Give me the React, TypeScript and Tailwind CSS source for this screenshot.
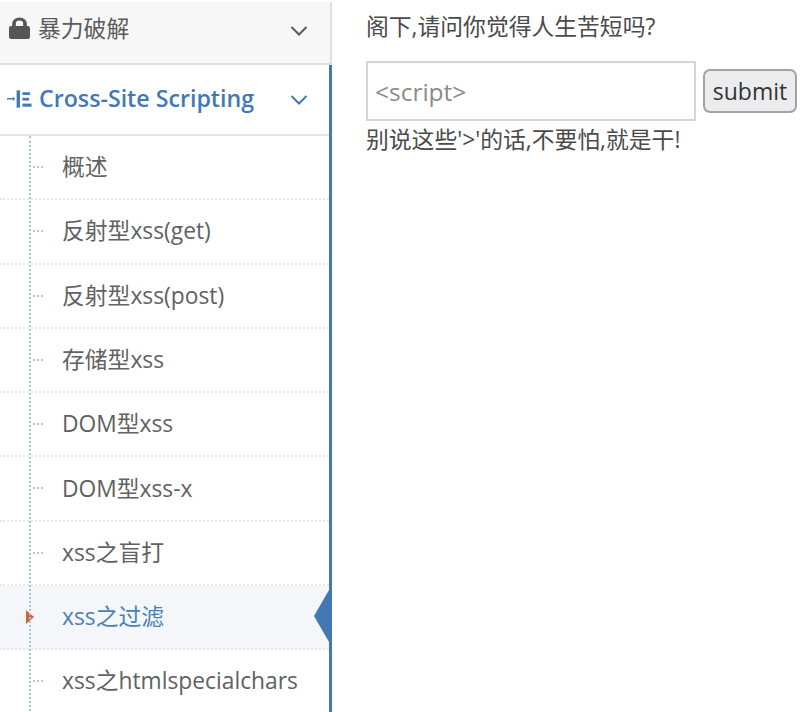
const items = [
  '概述',
  '反射型xss(get)',
  '反射型xss(post)',
  '存储型xss',
  'DOM型xss',
  'DOM型xss-x',
  'xss之盲打',
  'xss之过滤',
  'xss之htmlspecialchars',
];

function Chevron({ className }: { className: string }) {
  return (
    <svg viewBox="0 0 18 12" className={className} fill="none" stroke="currentColor" strokeWidth="2">
      <path d="M1.5 2 L9 9.5 L16.5 2" />
    </svg>
  );
}

function SubItem({ label }: { label: string }) {
  const active = label === 'xss之过滤';
  return (
    <li
      className={`relative h-[64.3px] flex items-center pl-[62px] text-[22.8px] border-b-2 border-dotted border-[#e8e8e8] ${
        active ? 'bg-[#f4f6f9] text-[#4b80b5]' : 'text-[#616161]'
      }`}
    >
      {active ? (
        <>
          <span className="absolute left-[26px] top-[24px] w-0 h-0 border-y-[7px] border-y-transparent border-l-[8px] border-l-[#c86a35]" />
          <span className="absolute right-0 top-[4px] w-0 h-0 border-y-[26px] border-y-transparent border-r-[15px] border-r-[#4279b5]" />
        </>
      ) : (
        <span className="absolute left-[33px] top-[30px] w-[10px] border-t-2 border-dotted border-[#c4c4c4]" />
      )}
      {label}
    </li>
  );
}

export default function App() {
  return (
    <div className="flex h-[712px] w-[806px] overflow-hidden bg-white font-['Open_Sans','Noto_Sans_CJK_SC',sans-serif]">
      <aside className="w-[332px] shrink-0 pt-[2px]">
        <div className="h-[63px] flex items-center justify-between pl-[9px] pr-[22px] bg-[#f7f7f7] border-b-2 border-r-2 border-[#e0e0e0] text-[#5b5b5b]">
          <div className="flex items-center gap-[8px] text-[22.8px] -mt-[6px]">
            <svg viewBox="0 0 20 22" className="w-[21px] h-[22px] -mt-[3px]" preserveAspectRatio="none" fill="#565656">
              <path d="M3 9 V6.5 a7 6 0 0 1 14 0 V9 h1 a2 2 0 0 1 2 2 v9 a2 2 0 0 1 -2 2 H2 a2 2 0 0 1 -2 -2 v-9 a2 2 0 0 1 2 -2 z M6.5 9 h7 V6.5 a3.5 3 0 0 0 -7 0 z" />
            </svg>
            <span>暴力破解</span>
          </div>
          <Chevron className="w-[18px] h-[12px] text-[#5b5b5b] -mt-[4px]" />
        </div>
        <div className="relative border-r-[3px] border-[#4279b5] h-[647px]">
          <div className="h-[71px] flex items-center justify-between pl-[7px] pr-[21px] border-b-2 border-[#e6e6e6] text-[#4279b5]">
            <div className="flex items-center gap-[7px] text-[23.2px] font-semibold">
              <svg viewBox="0 0 26 18" className="w-[25px] h-[22px]" fill="#4279b5">
                <rect x="0" y="8" width="6" height="1.5" />
                <path d="M6 6.5 L8.5 8.8 L6 11 z" />
                <rect x="10" y="0" width="3.5" height="18" />
                <rect x="16" y="2" width="8" height="2.8" />
                <rect x="16" y="7.8" width="7" height="2.8" />
                <rect x="16" y="13.8" width="9.5" height="3.2" />
              </svg>
              <span className="-mt-[2px]">Cross-Site Scripting</span>
            </div>
            <Chevron className="w-[18px] h-[12px]" />
          </div>
          <ul className="relative">
            {items.map((label) => (
              <SubItem key={label} label={label} />
            ))}
            <span className="absolute left-[29px] top-0 bottom-0 border-l-2 border-dotted border-[#a9c3d8]" />
          </ul>
        </div>
      </aside>
      <main className="flex-1 pl-[34px] text-[22.8px] text-[#4a4a4a] leading-[30px]">
        <p className="mt-[12px]">阁下,请问你觉得人生苦短吗?</p>
        <div className="mt-[19px] flex items-center gap-[7px]">
          <input
            placeholder="<script>"
            className="w-[330px] h-[60px] border-2 border-[#d5d5d5] px-[7px] text-[24.5px] outline-none placeholder:text-[#8a8a8a]"
          />
          <button className="w-[94px] h-[44px] rounded-[7px] border-2 border-[#a3a3a3] bg-[#ececef] text-[23px] text-[#333]">
            submit
          </button>
        </div>
        <p className="mt-[4px]">别说这些'&gt;'的话,不要怕,就是干!</p>
      </main>
    </div>
  );
}
